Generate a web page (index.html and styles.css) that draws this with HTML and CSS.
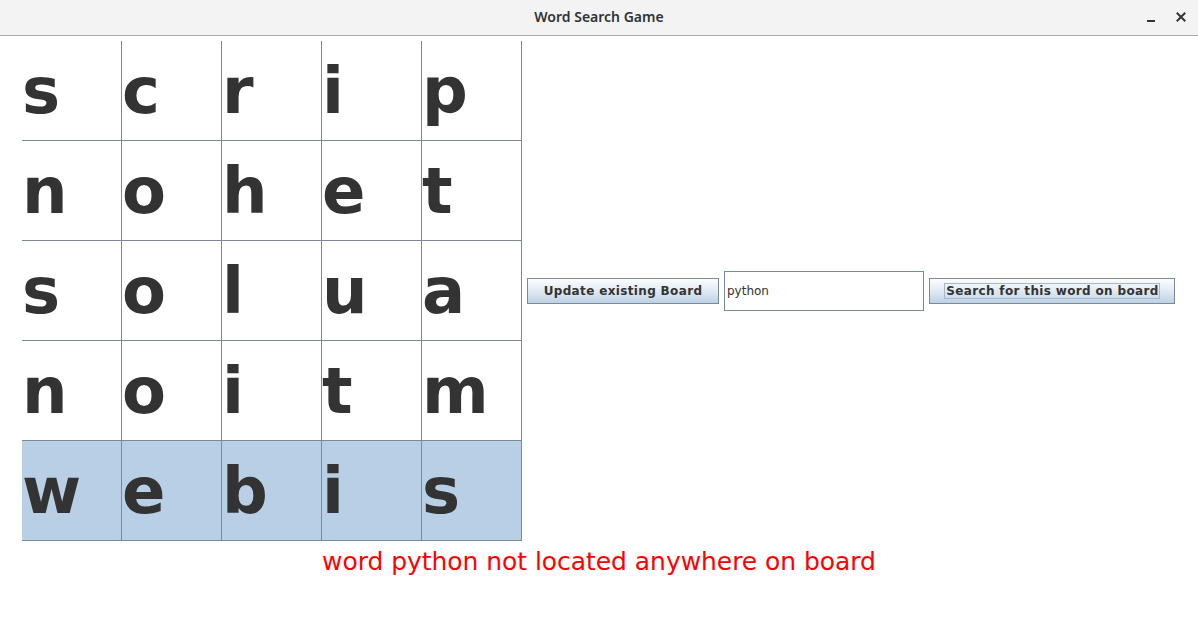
FILE: index.html
```html
<!DOCTYPE html>
<html>
<head>
<meta charset="utf-8">
<title>Word Search Game</title>
<link rel="stylesheet" href="styles.css">
</head>
<body>
<div class="window">
  <div class="titlebar">
    <span class="title">Word Search Game</span>
    <div class="wincontrols">
      <span class="minimize"></span>
      <svg class="close" width="10" height="10" viewBox="0 0 10 10"><path d="M1.5 1.5 L8.5 8.5 M8.5 1.5 L1.5 8.5" stroke="#2e3436" stroke-width="2" stroke-linecap="square"/></svg>
    </div>
  </div>
  <div class="content">
    <div class="main">
      <div class="board">
        <div class="cell">s</div><div class="cell">c</div><div class="cell">r</div><div class="cell">i</div><div class="cell">p</div>
        <div class="cell">n</div><div class="cell">o</div><div class="cell">h</div><div class="cell">e</div><div class="cell">t</div>
        <div class="cell">s</div><div class="cell">o</div><div class="cell">l</div><div class="cell">u</div><div class="cell">a</div>
        <div class="cell">n</div><div class="cell">o</div><div class="cell">i</div><div class="cell">t</div><div class="cell">m</div>
        <div class="cell hl">w</div><div class="cell hl">e</div><div class="cell hl">b</div><div class="cell hl">i</div><div class="cell hl">s</div>
      </div>
      <div class="controls">
        <button class="btn btn-update">Update existing Board</button>
        <div class="field">python</div>
        <button class="btn btn-search"><span class="focus">Search for this word on board</span></button>
      </div>
    </div>
    <div class="message">word python not located anywhere on board</div>
  </div>
</div>
</body>
</html>
```

FILE: styles.css
```css
html, body {
  margin: 0;
  padding: 0;
  background: #ffffff;
}
.window {
  width: 1198px;
  height: 632px;
  background: #ffffff;
  font-family: "DejaVu Sans", sans-serif;
}
.titlebar {
  box-sizing: border-box;
  height: 36px;
  background: #f3f3f3;
  border-bottom: 1px solid #a7a7a7;
  display: flex;
  align-items: center;
  justify-content: center;
  position: relative;
}
.title {
  font-family: "Noto Sans", sans-serif;
  font-weight: 600;
  font-size: 14px;
  color: #2e3436;
  margin-top: -2px;
}
.wincontrols {
  position: absolute;
  right: 12px;
  top: 12px;
  display: flex;
  align-items: center;
  gap: 21px;
}
.minimize {
  display: block;
  width: 8px;
  height: 2px;
  background: #2e3436;
  margin-top: 7px;
}
.close {
  display: block;
}
.content {
  padding: 5px 0 0 22px;
}
.main {
  display: flex;
  align-items: center;
}
.board {
  display: grid;
  grid-template-columns: repeat(5, 100px);
  grid-template-rows: repeat(5, 100px);
}
.cell {
  box-sizing: border-box;
  border-right: 1px solid #7a8a99;
  border-bottom: 1px solid #7a8a99;
  background: #ffffff;
  color: #333333;
  font-family: "DejaVu Sans", sans-serif;
  font-weight: bold;
  font-size: 64px;
  display: flex;
  align-items: center;
}
.cell.hl {
  background: #b8cfe5;
}
.controls {
  display: flex;
  align-items: center;
  margin-left: 5px;
}
.btn {
  box-sizing: border-box;
  height: 26px;
  border: 1px solid #7a8a99;
  border-radius: 0;
  background: linear-gradient(#fbfcfe 0%, #e6eef6 40%, #cfdeec 75%, #bcd0e4 100%);
  font-family: "DejaVu Sans", sans-serif;
  font-weight: bold;
  font-size: 12px;
  letter-spacing: 0.35px;
  color: #333333;
  padding: 0;
  margin: 0;
  display: flex;
  align-items: center;
  justify-content: center;
}
.btn-update {
  width: 192px;
}
.btn-search {
  width: 246px;
  margin-left: 5px;
}
.focus {
  border: 1px solid #a3b8cc;
  padding: 0 0 0 1px;
  line-height: 14px;
}
.field {
  box-sizing: border-box;
  width: 200px;
  height: 40px;
  margin-left: 5px;
  border: 1px solid #7a8a99;
  background: #ffffff;
  font-family: "DejaVu Sans", sans-serif;
  font-size: 12px;
  color: #333333;
  display: flex;
  align-items: center;
  padding-left: 2px;
}
.message {
  width: 1154px;
  text-align: center;
  color: #ff0000;
  font-family: "DejaVu Sans", sans-serif;
  font-size: 25px;
  letter-spacing: -0.05px;
  margin-top: 6px;
}
```
